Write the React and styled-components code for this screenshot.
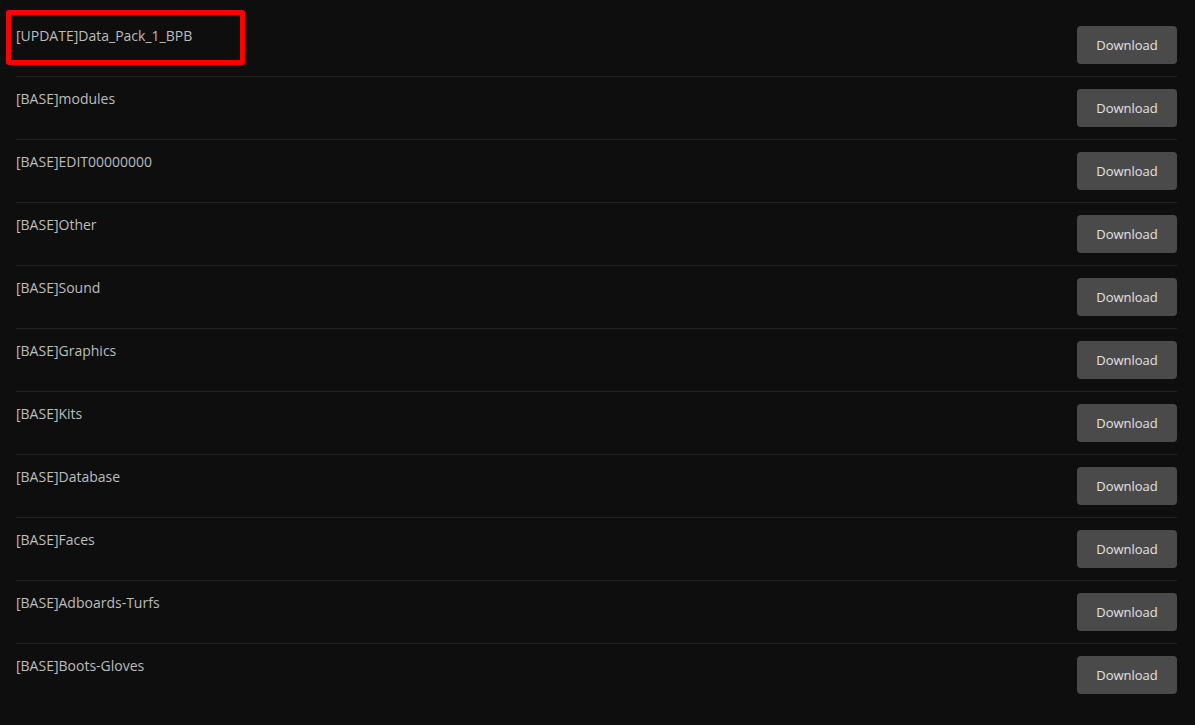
import React from "react";
import styled, { createGlobalStyle } from "styled-components";

const GlobalStyle = createGlobalStyle`
	html, body {
		margin: 0;
		padding: 0;
		background: #0e0e0e;
	}
	body {
		font-family: "Open Sans", "Liberation Sans", sans-serif;
	}
`;

const Page = styled.div`
	position: relative;
	min-height: 725px;
	padding: 14px 18px 0 16px;
	box-sizing: border-box;
	background: #0e0e0e;
`;

const List = styled.ul`
	list-style: none;
	margin: 0;
	padding: 0;
`;

const Row = styled.li`
	display: flex;
	justify-content: space-between;
	align-items: flex-start;
	padding: 12px 0;
	border-top: ${({ $first }) => ($first ? "none" : "1px solid #222222")};
`;

const Name = styled.span`
	color: #bdbdbd;
	font-size: 14px;
	line-height: 20px;
`;

const DownloadBtn = styled.button`
	width: 100px;
	height: 38px;
	border: none;
	border-radius: 4px;
	background: #4a4a4a;
	color: #e2e2e2;
	font-family: "Open Sans", "Liberation Sans", sans-serif;
	font-size: 13px;
	cursor: pointer;
	padding: 0;

	&:hover {
		background: #5a5a5a;
	}
`;

// annotation box drawn over the first entry
const Highlight = styled.div`
	position: absolute;
	left: 6px;
	top: 10px;
	width: 239px;
	height: 55px;
	box-sizing: border-box;
	border: 5px solid #ff0000;
	border-radius: 3px;
	pointer-events: none;
`;

const files = [
	"[UPDATE]Data_Pack_1_BPB",
	"[BASE]modules",
	"[BASE]EDIT00000000",
	"[BASE]Other",
	"[BASE]Sound",
	"[BASE]Graphics",
	"[BASE]Kits",
	"[BASE]Database",
	"[BASE]Faces",
	"[BASE]Adboards-Turfs",
	"[BASE]Boots-Gloves",
];

function App() {
	return (
		<>
			<GlobalStyle />
			<Page>
				<List>
					{files.map((f, i) => (
						<Row key={f} $first={i === 0}>
							<Name>{f}</Name>
							<DownloadBtn>Download</DownloadBtn>
						</Row>
					))}
				</List>
				<Highlight />
			</Page>
		</>
	);
}

export default App;
